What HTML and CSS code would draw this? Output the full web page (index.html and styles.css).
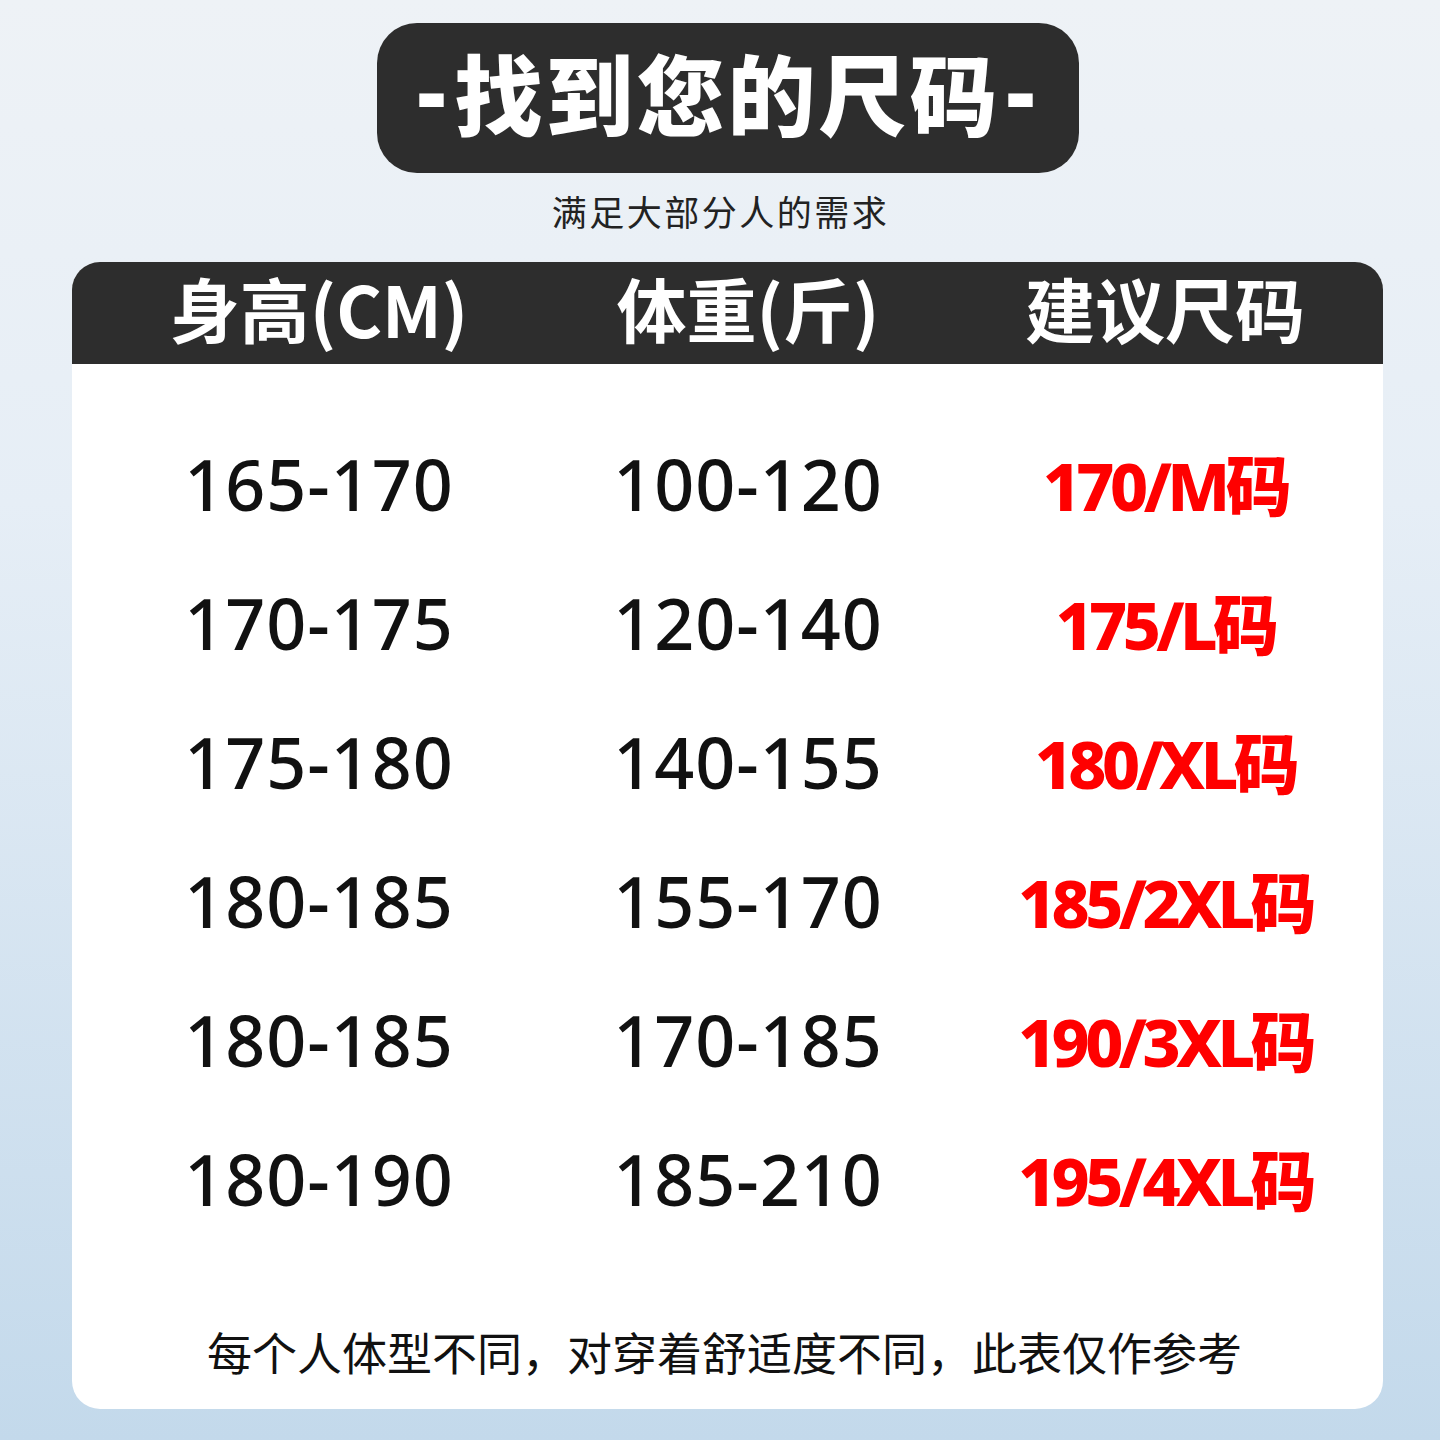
FILE: index.html
```html
<!DOCTYPE html>
<html lang="zh-CN">
<head>
<meta charset="utf-8">
<title>找到您的尺码</title>
<link rel="stylesheet" href="styles.css">
</head>
<body>
<div class="page">
  <div class="title"><span class="dash">-</span>找到您的尺码<span class="dash">-</span></div>
  <div class="subtitle">满足大部分人的需求</div>
  <div class="card">
    <div class="head grid">
      <div class="hcell">身高(CM)</div>
      <div class="hcell">体重(斤)</div>
      <div class="hcell">建议尺码</div>
    </div>
    <div class="rows">
      <div class="row grid"><div class="num">165-170</div><div class="num">100-120</div><div class="size">170/M码</div></div>
      <div class="row grid"><div class="num">170-175</div><div class="num">120-140</div><div class="size">175/L码</div></div>
      <div class="row grid"><div class="num">175-180</div><div class="num">140-155</div><div class="size">180/XL码</div></div>
      <div class="row grid"><div class="num">180-185</div><div class="num">155-170</div><div class="size">185/2XL码</div></div>
      <div class="row grid"><div class="num">180-185</div><div class="num">170-185</div><div class="size">190/3XL码</div></div>
      <div class="row grid"><div class="num">180-190</div><div class="num">185-210</div><div class="size">195/4XL码</div></div>
    </div>
    <div class="note">每个人体型不同，对穿着舒适度不同，此表仅作参考</div>
  </div>
</div>
</body>
</html>
```

FILE: styles.css
```css
html, body {
  margin: 0;
  padding: 0;
}
body {
  width: 1440px;
  height: 1440px;
  background: linear-gradient(180deg, #eef2f6 0%, #e6eef6 35%, #c3d9eb 100%);
  font-family: "Noto Sans CJK SC", "Noto Sans", sans-serif;
  overflow: hidden;
}
.page {
  display: flex;
  flex-direction: column;
  align-items: center;
  padding: 23px 57px 0 72px;
}
.title {
  width: 702px;
  height: 150px;
  box-sizing: border-box;
  background: #2d2d2d;
  border-radius: 40px;
  color: #fff;
  font-weight: 900;
  font-size: 88px;
  letter-spacing: 3px;
  display: flex;
  align-items: center;
  justify-content: center;
  line-height: 1.2;
  padding-bottom: 14px;
}
.dash {
  font-family: "Noto Sans", sans-serif;
  font-weight: 900;
  margin: 0 6px;
}
.subtitle {
  height: 89px;
  box-sizing: border-box;
  padding-bottom: 14px;
  display: flex;
  align-items: center;
  font-size: 35px;
  letter-spacing: 2.5px;
  color: #222;
  margin-left: -14px;
}
.card {
  width: 1311px;
  height: 1147px;
  background: #fff;
  border-radius: 28px;
  display: flex;
  flex-direction: column;
}
.grid {
  display: grid;
  grid-template-columns: 460px 398px 436px;
  padding-left: 17px;
  text-align: center;
  align-items: center;
}
.head {
  height: 102px;
  box-sizing: border-box;
  padding-bottom: 10px;
  background: #2d2d2d;
  border-radius: 28px 28px 0 0;
  color: #fff;
  font-weight: 700;
  font-size: 70px;
  line-height: 92px;
}
.hcell {
  height: 92px;
}
.rows {
  padding-top: 50px;
}
.row {
  height: 139px;
}
.num {
  font-family: "Noto Sans", sans-serif;
  font-weight: 500;
  font-size: 70px;
  letter-spacing: 1px;
  color: #111;
}
.size {
  font-family: "Noto Sans", "Noto Sans CJK SC", sans-serif;
  font-weight: 800;
  font-size: 66px;
  letter-spacing: -4.5px;
  color: #ff0000;
  padding-bottom: 4px;
}
.note {
  padding-top: 80px;
  line-height: 48px;
  text-align: center;
  font-size: 45px;
  letter-spacing: 0;
  color: #111;
  margin-left: -6px;
}
```
